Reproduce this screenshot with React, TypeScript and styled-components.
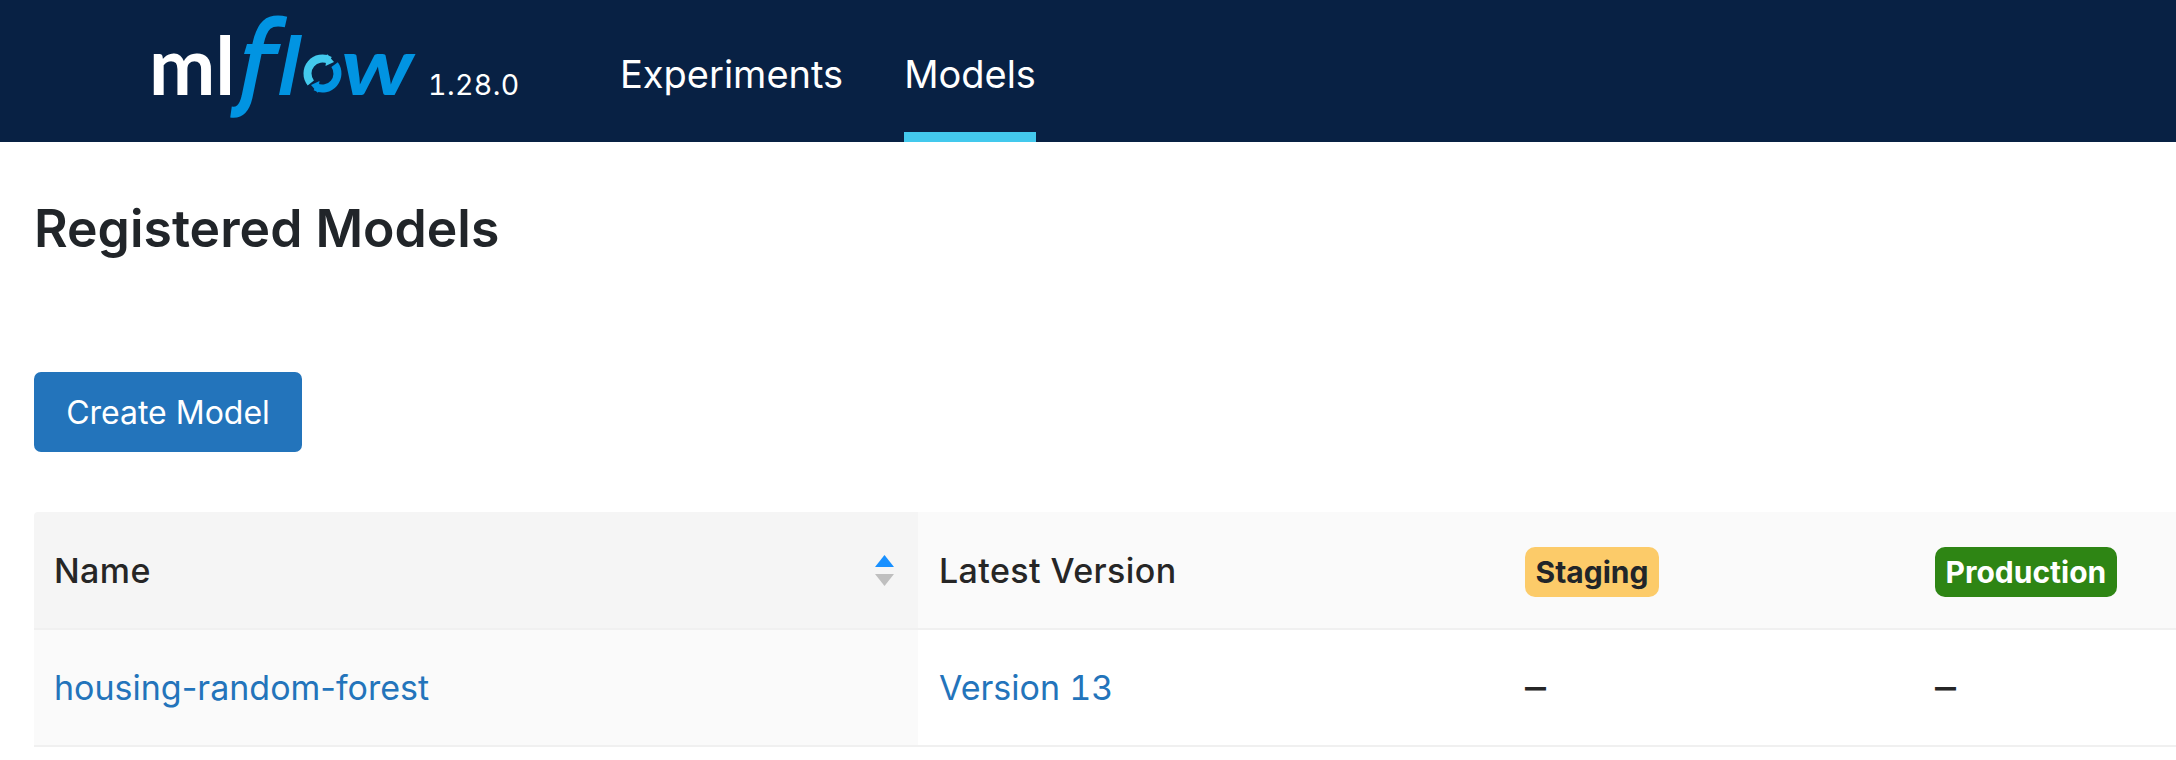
import React from "react";
import styled, { createGlobalStyle } from "styled-components";

const Global = createGlobalStyle`
  html, body { margin: 0; padding: 0; background: #fff; overflow: hidden; }
  body { font-family: Inter, "Liberation Sans", sans-serif; }
`;
const Header = styled.header`
  display: flex; align-items: stretch; height: 142px; background: #082144; padding-left: 150px; box-sizing: border-box;
`;
const LogoLink = styled.a`
  display: block; width: 270px; height: 110px; margin-top: 12px; flex: none;
`;
const Version = styled.span`
  flex: none; color: #fff; font-size: 28.5px; font-feature-settings: "tnum"; line-height: 34px; width: 200px; padding: 68px 0 0 8px; box-sizing: border-box; letter-spacing: .4px;
`;
const Nav = styled.nav`display: flex; gap: 61px;`;
const NavItem = styled.a<{ $active?: boolean }>`
  color: #fff; font-size: 38px; line-height: 44px; padding-top: 52px; box-sizing: border-box; height: 142px;
  border-bottom: 10px solid ${(p) => (p.$active ? "#43c9ed" : "transparent")};
`;
const Main = styled.main`padding-left: 34px;`;
const Title = styled.h1`
  margin: 0; padding-top: 56px; height: 230px; box-sizing: border-box; color: #212529; font-size: 51.7px; line-height: 60px; font-weight: 600;
`;
const CreateButton = styled.button`
  display: block; width: 268px; height: 80px; background: #2374bb; color: #fff; border: 0; border-radius: 7px;
  font: 400 32px/40px Inter, sans-serif; padding: 2px 0 0;
`;
const Table = styled.table`
  margin-top: 60px; width: 2142px; table-layout: fixed; border-collapse: separate; border-spacing: 0;
`;
const Th = styled.th<{ $sorted?: boolean }>`
  height: 118px; box-sizing: border-box; padding: 0 21px; text-align: left; vertical-align: middle;
  background: ${(p) => (p.$sorted ? "#f5f5f5" : "#fafafa")}; border-bottom: 2px solid #f0f0f0;
  color: #262626; font-size: 34px; font-weight: 500; letter-spacing: .4px;
  &:first-child { border-top-left-radius: 4px; padding-left: 20px; }
`;
const HeadInner = styled.div`display: flex; align-items: center; justify-content: space-between;`;
const Td = styled.td<{ $sorted?: boolean }>`
  height: 117px; box-sizing: border-box; padding: 0 21px; background: ${(p) => (p.$sorted ? "#fafafa" : "#fff")};
  border-bottom: 2px solid #f0f0f0; color: #262626; font-size: 34px;
  &:first-child { padding-left: 20px; }
`;
const Link = styled.a<{ $tabular?: boolean }>`
  color: #2374bb; font-feature-settings: ${(p) => (p.$tabular ? '"tnum"' : "normal")};
`;
const Dash = styled.span`font-size: 42px; line-height: 1;`;
const Badge = styled.span<{ $bg: string; $fg: string }>`
  display: block; width: fit-content; margin-top: 4px; height: 50px; line-height: 50px; padding: 0 10.5px; border-radius: 10px; box-sizing: border-box;
  background: ${(p) => p.$bg}; color: ${(p) => p.$fg}; font-size: 30px; font-weight: 700; letter-spacing: 0;
`;
const SortGlyph = styled.svg`flex: none; margin-right: 3px;`;
const SortIcon = () => (
  <SortGlyph width="19" height="31" viewBox="0 0 19 31">
    <path d="M9.5 0 L19 12 H0 Z" fill="#1890ff" />
    <path d="M9.5 31 L19 19 H0 Z" fill="#bfbfbf" />
  </SortGlyph>
);
const Logo = () => (
  <svg width="270" height="110" viewBox="150 12 270 110">
    <text x="149" y="95" fontFamily="Lato" fontWeight="700" fontSize="80" fill="#fff" textLength="86" lengthAdjust="spacingAndGlyphs">ml</text>
    <path d="M286 22 C268 18 262 26 258 44 L247 97 C244 110 238 113 231 112" fill="none" stroke="#0194e2" strokeWidth="11" />
    <path d="M247 44 H281 L278 54 H244 Z" fill="#0194e2" />
    <path d="M302 35 L291 35 L279 95 L290 95 Z" fill="#0194e2" />
    <path d="M310.8 82.9 A15 15 0 0 1 329.8 60.4" fill="none" stroke="#43c9ed" strokeWidth="8" />
    <path d="M327 54 L334 62 L325.5 66 Z" fill="#43c9ed" />
    <path d="M334.6 64.7 A15 15 0 0 1 315.5 86.8" fill="none" stroke="#0194e2" strokeWidth="8" />
    <path d="M318 93 L311 85 L319.5 81 Z" fill="#0194e2" />
    <text x="341" y="95" fontFamily="Lato" fontStyle="italic" fontWeight="700" fontSize="80" fill="#0194e2" textLength="73" lengthAdjust="spacingAndGlyphs">w</text>
  </svg>
);
export default function App() {
  return (
    <>
      <Global />
      <Header>
        <LogoLink><Logo /></LogoLink>
        <Version>1.28.0</Version>
        <Nav>
          <NavItem>Experiments</NavItem>
          <NavItem $active>Models</NavItem>
        </Nav>
      </Header>
      <Main>
        <Title>Registered Models</Title>
        <CreateButton>Create Model</CreateButton>
        <Table>
          <colgroup>
            <col style={{ width: 884 }} /><col style={{ width: 586 }} /><col style={{ width: 410 }} /><col />
          </colgroup>
          <thead>
            <tr>
              <Th $sorted><HeadInner>Name<SortIcon /></HeadInner></Th>
              <Th>Latest Version</Th>
              <Th><Badge $bg="#fccb69" $fg="#212529">Staging</Badge></Th>
              <Th><Badge $bg="#2e8514" $fg="#fff">Production</Badge></Th>
            </tr>
          </thead>
          <tbody>
            <tr>
              <Td $sorted><Link>housing-random-forest</Link></Td>
              <Td><Link $tabular>Version 13</Link></Td>
              <Td><Dash>–</Dash></Td>
              <Td><Dash>–</Dash></Td>
            </tr>
          </tbody>
        </Table>
      </Main>
    </>
  );
}
